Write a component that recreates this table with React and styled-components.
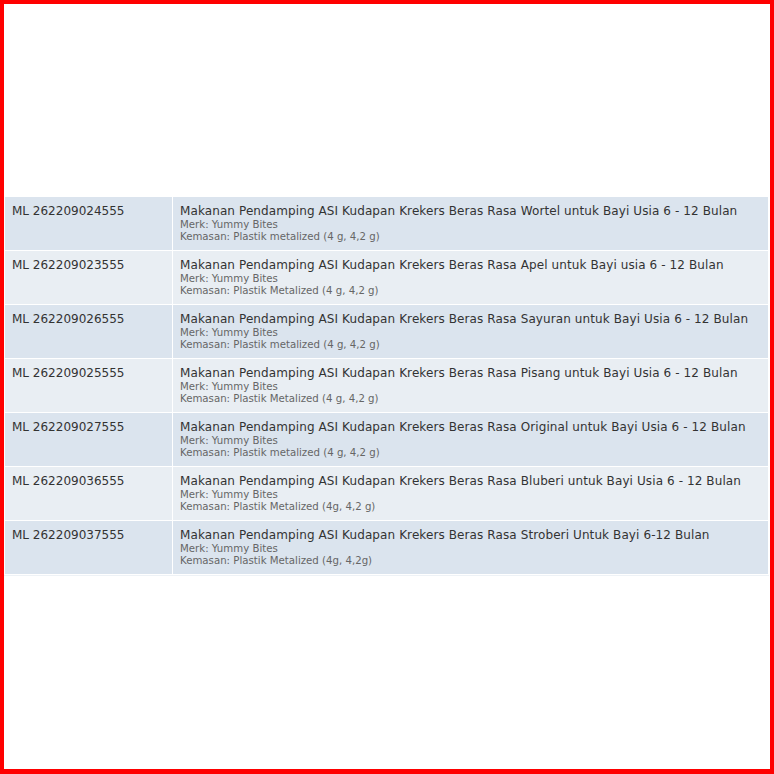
import React from "react";
import styled, { createGlobalStyle } from "styled-components";

const Global = createGlobalStyle`
  html, body { margin: 0; padding: 0; background: #fff; }
  * { box-sizing: border-box; }
`;

const Frame = styled.div`
  width: 774px;
  height: 774px;
  border: 4px solid #ff0000;
  border-bottom-width: 5px;
  background: #fff;
  padding-top: 192px;
  font-family: "DejaVu Sans", Verdana, sans-serif;
`;

const Table = styled.table`
  width: 765px;
  border-collapse: separate;
  border-spacing: 1px;
  border-bottom: 1px solid #eef2f6;
`;

const Row = styled.tr`
  background: ${(p) => (p.$alt ? "#e9eef3" : "#dbe4ee")};
`;

const Cell = styled.td`
  vertical-align: top;
  height: 53px;
  padding: 7px 7px 0 7px;
  color: #333;
  font-size: 12px;
  line-height: 15px;
  width: ${(p) => (p.$code ? "167px" : "auto")};
`;

const Title = styled.div`
  font-size: 12px;
  line-height: 15px;
  letter-spacing: 0.1px;
  color: #333;
`;

const Meta = styled.div`
  font-size: 10.2px;
  line-height: 11.5px;
  color: #666;
`;

const items = [
  ["ML 262209024555", "Makanan Pendamping ASI Kudapan Krekers Beras Rasa Wortel untuk Bayi Usia 6 - 12 Bulan", "Kemasan: Plastik metalized (4 g, 4,2 g)"],
  ["ML 262209023555", "Makanan Pendamping ASI Kudapan Krekers Beras Rasa Apel untuk Bayi usia 6 - 12 Bulan", "Kemasan: Plastik Metalized (4 g, 4,2 g)"],
  ["ML 262209026555", "Makanan Pendamping ASI Kudapan Krekers Beras Rasa Sayuran untuk Bayi Usia 6 - 12 Bulan", "Kemasan: Plastik metalized (4 g, 4,2 g)"],
  ["ML 262209025555", "Makanan Pendamping ASI Kudapan Krekers Beras Rasa Pisang untuk Bayi Usia 6 - 12 Bulan", "Kemasan: Plastik Metalized (4 g, 4,2 g)"],
  ["ML 262209027555", "Makanan Pendamping ASI Kudapan Krekers Beras Rasa Original untuk Bayi Usia 6 - 12 Bulan", "Kemasan: Plastik metalized (4 g, 4,2 g)"],
  ["ML 262209036555", "Makanan Pendamping ASI Kudapan Krekers Beras Rasa Bluberi untuk Bayi Usia 6 - 12 Bulan", "Kemasan: Plastik Metalized (4g, 4,2 g)"],
  ["ML 262209037555", "Makanan Pendamping ASI Kudapan Krekers Beras Rasa Stroberi Untuk Bayi 6-12 Bulan", "Kemasan: Plastik Metalized (4g, 4,2g)"],
];

export default function App() {
  return (
    <>
      <Global />
      <Frame>
        <Table>
          <tbody>
            {items.map(([code, title, pack], i) => (
              <Row key={code} $alt={i % 2 === 1}>
                <Cell $code>{code}</Cell>
                <Cell>
                  <Title>{title}</Title>
                  <Meta>Merk: Yummy Bites</Meta>
                  <Meta>{pack}</Meta>
                </Cell>
              </Row>
            ))}
          </tbody>
        </Table>
      </Frame>
    </>
  );
}
